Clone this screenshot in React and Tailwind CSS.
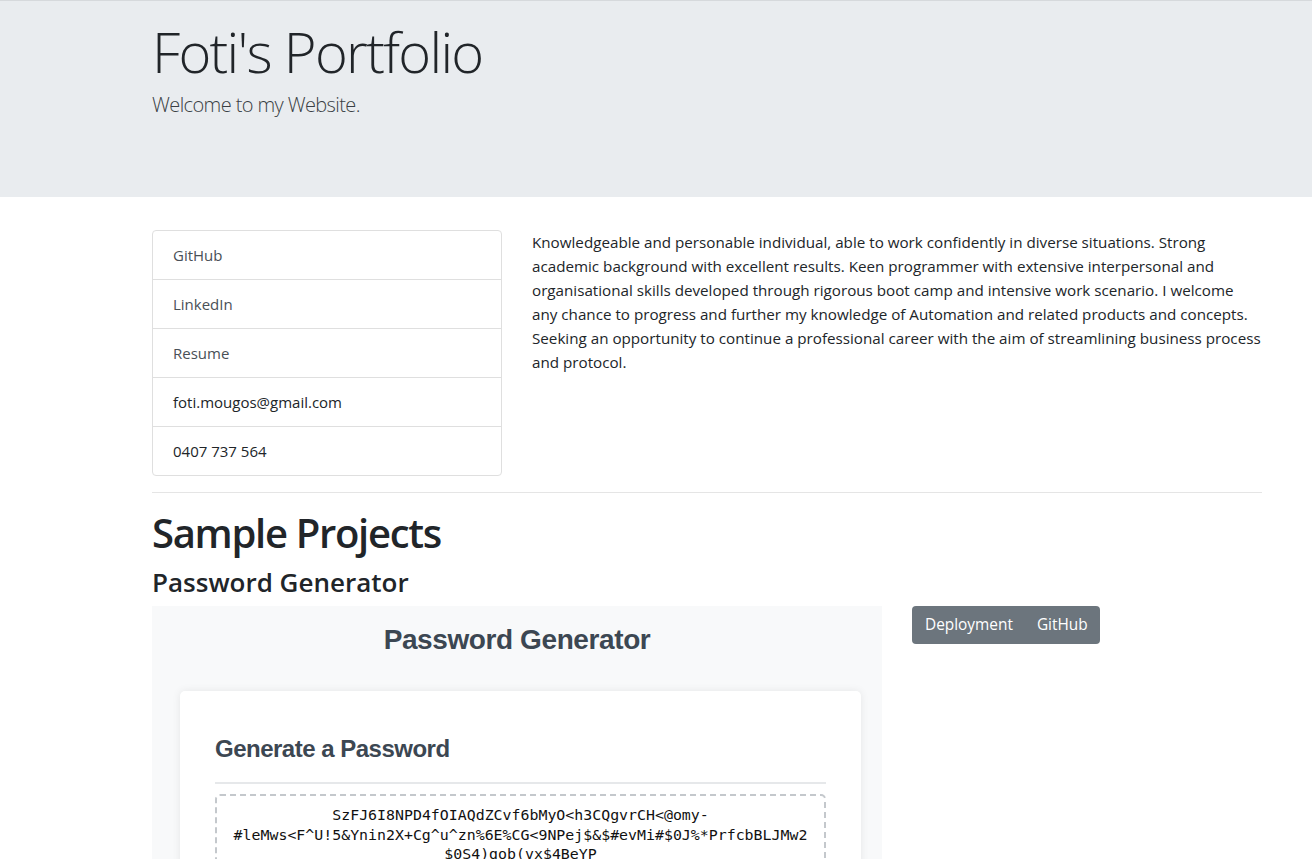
import React from 'react';

const links = [
  { label: 'GitHub', muted: true },
  { label: 'LinkedIn', muted: true },
  { label: 'Resume', muted: true },
  { label: 'foti.mougos@gmail.com', muted: false },
  { label: '0407 737 564', muted: false },
];

const aboutLines = [
  'Knowledgeable and personable individual, able to work confidently in diverse situations. Strong',
  'academic background with excellent results. Keen programmer with extensive interpersonal and',
  'organisational skills developed through rigorous boot camp and intensive work scenario. I welcome',
  'any chance to progress and further my knowledge of Automation and related products and concepts.',
  'Seeking an opportunity to continue a professional career with the aim of streamlining business process',
  'and protocol.',
];

const passwordLines = [
  'SzFJ6I8NPD4fOIAQdZCvf6bMyO<h3CQgvrCH<@omy-',
  '#leMws<F^U!5&Ynin2X+Cg^u^zn%6E%CG<9NPej$&$#evMi#$0J%*PrfcbBLJMw2',
  '$0S4)gob(vx$4BeYP',
];

const App = () => {
  return (
    <div className="min-h-screen bg-white text-[#212529] font-['Open_Sans','Noto_Sans',sans-serif]">
      {/* Jumbotron */}
      <div className="border-t border-[#d6d9dc] bg-[#e9ecef] pt-[17px] pb-[77px]">
        <div className="pl-[152px]">
          <h1 className="text-[56px] font-light leading-[1.2] tracking-[-1.7px]">Foti's Portfolio</h1>
          <p className="mt-[5px] text-[20px] font-light leading-[1.5] tracking-[-0.6px] text-[#3a3f44]">Welcome to my Website.</p>
        </div>
      </div>

      <div className="pl-[152px] pt-[33px]">
        <div className="w-[1110px]">
          {/* About row */}
          <div className="flex">
            <div className="w-[350px] shrink-0 rounded border border-[#dfdfdf] overflow-hidden">
              {links.map((link, i) => (
                <div
                  key={link.label}
                  className={`px-5 flex items-center text-[15px] ${i > 0 ? 'h-[49px] border-t border-[#dfdfdf]' : 'h-[48px]'} ${link.muted ? 'text-[#495057]' : 'text-[#212529]'}`}
                >
                  {link.label}
                </div>
              ))}
            </div>
            <div className="ml-[30px] w-[730px] text-[15.2px] leading-[24px]">
              {aboutLines.map((line) => (
                <span key={line} className="block whitespace-nowrap">{line}</span>
              ))}
            </div>
          </div>

          <hr className="mt-4 mb-4 border-t border-[#e5e5e5]" />

          <h1 className="text-[40px] font-semibold leading-[1.2] tracking-[-1.3px]">Sample Projects</h1>
          <h3 className="mt-2 text-[26px] font-semibold leading-[34px]">Password Generator</h3>

          {/* Project row */}
          <div className="flex mt-[7px]">
            <div className="w-[730px] shrink-0 h-[420px] bg-[#f8f9fa] overflow-hidden font-['Liberation_Sans',Arial,sans-serif]">
              <div className="pt-[16px] text-center text-[28px] font-bold leading-[36px] text-[#3c4752] tracking-[-0.4px]">
                Password Generator
              </div>
              <div className="mt-[33px] ml-[28px] mr-[21px] bg-white rounded-[5px] shadow-[0_0_8px_rgba(0,0,0,0.08)] px-[35px] pt-[42px] pb-8">
                <div className="text-[24px] font-bold leading-[32px] text-[#3c4752] tracking-[-0.5px]">Generate a Password</div>
                <div className="mt-[17px] h-[2px] bg-[#e6e8ea]" />
                <div className="mt-[10px] border-2 border-dashed border-[#c4c8cc] rounded-[5px] pt-[10px] pb-6 text-center font-['DejaVu_Sans_Mono','Liberation_Mono',monospace] text-[14.9px] leading-[19.5px] text-[#111]">
                  {passwordLines.map((line) => (
                    <div key={line} className="whitespace-nowrap">{line}</div>
                  ))}
                </div>
              </div>
            </div>
            <div className="ml-[30px]">
              <div className="inline-flex rounded bg-[#6c757d] text-white text-[15.4px] leading-[24px]">
                <span className="pl-[13px] pr-3 py-[7px]">Deployment</span>
                <span className="px-3 py-[7px]">GitHub</span>
              </div>
            </div>
          </div>
        </div>
      </div>
    </div>
  );
};

export default App;
